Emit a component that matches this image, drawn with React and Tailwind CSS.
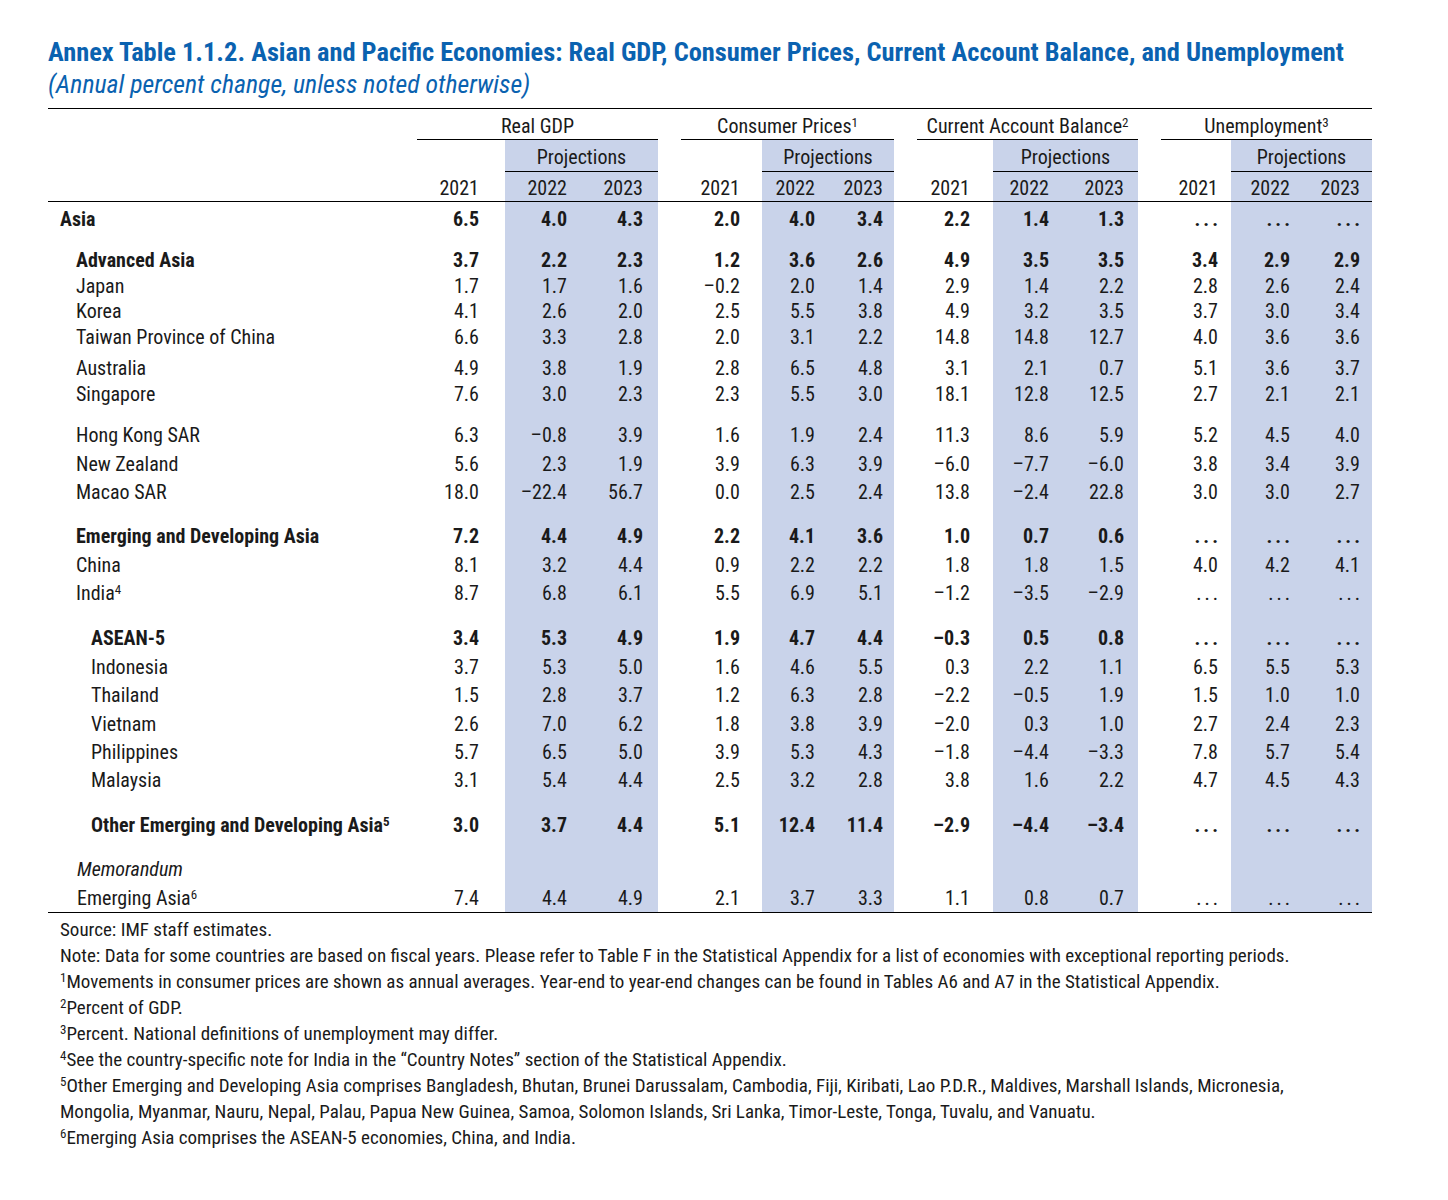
const FONT = "font-['Roboto_Condensed','Roboto',sans-serif]";

const groups = [
  { title: 'Real GDP', sup: null, pr: ['pr-[26px]', 'pr-[14px]', 'pr-[15px]'] },
  { title: 'Consumer Prices', sup: '1', pr: ['pr-[22px]', 'pr-[13px]', 'pr-[11px]'] },
  { title: 'Current Account Balance', sup: '2', pr: ['pr-[23px]', 'pr-[15px]', 'pr-[14px]'] },
  { title: 'Unemployment', sup: '3', pr: ['pr-[13px]', 'pr-[12px]', 'pr-[12px]'] },
];

const D = '...';

const rows = [
  { name: 'Asia', pl: 'pl-[12px]', bold: true, h: 'h-[27px]', v: ['6.5', '4.0', '4.3', '2.0', '4.0', '3.4', '2.2', '1.4', '1.3', D, D, D] },
  { name: 'Advanced Asia', pl: 'pl-[28px]', bold: true, h: 'h-[41px]', v: ['3.7', '2.2', '2.3', '1.2', '3.6', '2.6', '4.9', '3.5', '3.5', '3.4', '2.9', '2.9'] },
  { name: 'Japan', pl: 'pl-[28px]', h: 'h-[26px]', v: ['1.7', '1.7', '1.6', '–0.2', '2.0', '1.4', '2.9', '1.4', '2.2', '2.8', '2.6', '2.4'] },
  { name: 'Korea', pl: 'pl-[28px]', h: 'h-[25px]', v: ['4.1', '2.6', '2.0', '2.5', '5.5', '3.8', '4.9', '3.2', '3.5', '3.7', '3.0', '3.4'] },
  { name: 'Taiwan Province of China', pl: 'pl-[28px]', h: 'h-[26px]', v: ['6.6', '3.3', '2.8', '2.0', '3.1', '2.2', '14.8', '14.8', '12.7', '4.0', '3.6', '3.6'] },
  { name: 'Australia', pl: 'pl-[28px]', h: 'h-[31px]', v: ['4.9', '3.8', '1.9', '2.8', '6.5', '4.8', '3.1', '2.1', '0.7', '5.1', '3.6', '3.7'] },
  { name: 'Singapore', pl: 'pl-[28px]', h: 'h-[26px]', v: ['7.6', '3.0', '2.3', '2.3', '5.5', '3.0', '18.1', '12.8', '12.5', '2.7', '2.1', '2.1'] },
  { name: 'Hong Kong SAR', pl: 'pl-[28px]', h: 'h-[41px]', v: ['6.3', '–0.8', '3.9', '1.6', '1.9', '2.4', '11.3', '8.6', '5.9', '5.2', '4.5', '4.0'] },
  { name: 'New Zealand', pl: 'pl-[28px]', h: 'h-[29px]', v: ['5.6', '2.3', '1.9', '3.9', '6.3', '3.9', '–6.0', '–7.7', '–6.0', '3.8', '3.4', '3.9'] },
  { name: 'Macao SAR', pl: 'pl-[28px]', h: 'h-[28px]', v: ['18.0', '–22.4', '56.7', '0.0', '2.5', '2.4', '13.8', '–2.4', '22.8', '3.0', '3.0', '2.7'] },
  { name: 'Emerging and Developing Asia', pl: 'pl-[28px]', bold: true, h: 'h-[44px]', v: ['7.2', '4.4', '4.9', '2.2', '4.1', '3.6', '1.0', '0.7', '0.6', D, D, D] },
  { name: 'China', pl: 'pl-[28px]', h: 'h-[29px]', v: ['8.1', '3.2', '4.4', '0.9', '2.2', '2.2', '1.8', '1.8', '1.5', '4.0', '4.2', '4.1'] },
  { name: 'India', sup: '4', pl: 'pl-[28px]', h: 'h-[28px]', v: ['8.7', '6.8', '6.1', '5.5', '6.9', '5.1', '–1.2', '–3.5', '–2.9', D, D, D] },
  { name: 'ASEAN-5', pl: 'pl-[43px]', bold: true, h: 'h-[45px]', v: ['3.4', '5.3', '4.9', '1.9', '4.7', '4.4', '–0.3', '0.5', '0.8', D, D, D] },
  { name: 'Indonesia', pl: 'pl-[43px]', h: 'h-[29px]', v: ['3.7', '5.3', '5.0', '1.6', '4.6', '5.5', '0.3', '2.2', '1.1', '6.5', '5.5', '5.3'] },
  { name: 'Thailand', pl: 'pl-[43px]', h: 'h-[28px]', v: ['1.5', '2.8', '3.7', '1.2', '6.3', '2.8', '–2.2', '–0.5', '1.9', '1.5', '1.0', '1.0'] },
  { name: 'Vietnam', pl: 'pl-[43px]', h: 'h-[29px]', v: ['2.6', '7.0', '6.2', '1.8', '3.8', '3.9', '–2.0', '0.3', '1.0', '2.7', '2.4', '2.3'] },
  { name: 'Philippines', pl: 'pl-[43px]', h: 'h-[28px]', v: ['5.7', '6.5', '5.0', '3.9', '5.3', '4.3', '–1.8', '–4.4', '–3.3', '7.8', '5.7', '5.4'] },
  { name: 'Malaysia', pl: 'pl-[43px]', h: 'h-[28px]', v: ['3.1', '5.4', '4.4', '2.5', '3.2', '2.8', '3.8', '1.6', '2.2', '4.7', '4.5', '4.3'] },
  { name: 'Other Emerging and Developing Asia', sup: '5', pl: 'pl-[43px]', bold: true, h: 'h-[45px]', v: ['3.0', '3.7', '4.4', '5.1', '12.4', '11.4', '–2.9', '–4.4', '–3.4', D, D, D] },
  { name: 'Memorandum', italic: true, pl: 'pl-[29px]', h: 'h-[44px]', v: null },
  { name: 'Emerging Asia', sup: '6', pl: 'pl-[29px]', h: 'h-[33px]', pb: 'pb-[4px]', v: ['7.4', '4.4', '4.9', '2.1', '3.7', '3.3', '1.1', '0.8', '0.7', D, D, D] },
];

const GRID = 'grid grid-cols-[369px_88px_76px_77px_23px_81px_66px_66px_23px_76px_71px_74px_23px_70px_71px_70px]';
const SHADE = 'bg-[#c9d3ea]';

const notes = [
  { s: null, t: 'Source: IMF staff estimates.' },
  { s: null, t: 'Note: Data for some countries are based on fiscal years. Please refer to Table F in the Statistical Appendix for a list of economies with exceptional reporting periods.' },
  { s: '1', t: 'Movements in consumer prices are shown as annual averages. Year-end to year-end changes can be found in Tables A6 and A7 in the Statistical Appendix.' },
  { s: '2', t: 'Percent of GDP.' },
  { s: '3', t: 'Percent. National definitions of unemployment may differ.' },
  { s: '4', t: 'See the country-specific note for India in the “Country Notes” section of the Statistical Appendix.' },
  { s: '5', t: 'Other Emerging and Developing Asia comprises Bangladesh, Bhutan, Brunei Darussalam, Cambodia, Fiji, Kiribati, Lao P.D.R., Maldives, Marshall Islands, Micronesia, Mongolia, Myanmar, Nauru, Nepal, Palau, Papua New Guinea, Samoa, Solomon Islands, Sri Lanka, Timor-Leste, Tonga, Tuvalu, and Vanuatu.' },
  { s: '6', t: 'Emerging Asia comprises the ASEAN-5 economies, China, and India.' },
];

function Cell({ value, pr, shade, bold, head, pb = '' }) {
  const dots = value === D;
  return (
    <div className={`flex items-end justify-end ${head ? 'pb-[2px] leading-[22px]' : 'leading-[20px]'} ${pb} ${pr} ${shade ? SHADE : ''}`}>
      <span className={`${dots ? 'tracking-[3px] -mr-[3px]' : ''} ${bold ? 'font-bold' : ''}`}>{value}</span>
    </div>
  );
}

function DataRow({ row }) {
  return (
    <div className={`${GRID} ${row.h}`}>
      <div className={`flex items-end leading-[20px] ${row.pb || ''} ${row.pl}`}>
        <span className={`whitespace-nowrap ${row.bold ? 'font-bold' : ''} ${row.italic ? 'italic' : ''}`}>
          {row.name}
          {row.sup && <sup className="text-[13px]">{row.sup}</sup>}
        </span>
      </div>
      {groups.map((g, gi) => (
        <div key={gi} className="contents">
          {[0, 1, 2].map((k) => (
            <Cell key={k} value={row.v ? row.v[gi * 3 + k] : ''} pr={g.pr[k]} shade={k > 0} bold={row.bold} pb={row.pb} />
          ))}
          {gi < 3 && <div />}
        </div>
      ))}
    </div>
  );
}

export default function App() {
  return (
    <div className={`bg-white text-[#1a1a1a] ${FONT} w-[1448px] min-h-[1200px] pl-[48px] pt-[36px]`}>
      <h1 className="text-[#0a62b0] text-[26.4px] leading-[32px] font-bold whitespace-nowrap">
        Annex Table 1.1.2. Asian and Pacific Economies: Real GDP, Consumer Prices, Current Account Balance, and Unemployment
      </h1>
      <p className="text-[#0a62b0] text-[25.8px] leading-[32px] italic">(Annual percent change, unless noted otherwise)</p>

      <div className="w-[1324px] mt-[8px] border-t border-black text-[20px]">
        {/* group headers */}
        <div className={`${GRID} h-[31px]`}>
          <div />
          {groups.map((g, gi) => (
            <div key={gi} className="contents">
              <div className="col-span-3 flex items-end justify-center pb-[2px] border-b border-black">
                <span className="leading-[22px]">
                  {g.title}
                  {g.sup && <sup className="text-[13px]">{g.sup}</sup>}
                </span>
              </div>
              {gi < 3 && <div />}
            </div>
          ))}
        </div>
        {/* projections */}
        <div className={`${GRID} h-[32px]`}>
          <div />
          {groups.map((g, gi) => (
            <div key={gi} className="contents">
              <div />
              <div className={`col-span-2 flex items-end justify-center pb-[3px] border-b border-black ${SHADE}`}>
                <span className="leading-[22px]">Projections</span>
              </div>
              {gi < 3 && <div />}
            </div>
          ))}
        </div>
        {/* years */}
        <div className={`${GRID} h-[30px] border-b border-black`}>
          <div />
          {groups.map((g, gi) => (
            <div key={gi} className="contents">
              {['2021', '2022', '2023'].map((y, k) => (
                <Cell key={k} value={y} pr={g.pr[k]} shade={k > 0} head />
              ))}
              {gi < 3 && <div />}
            </div>
          ))}
        </div>
        {rows.map((r) => (
          <DataRow key={r.name} row={r} />
        ))}
        <div className="border-t border-black" />
      </div>

      <div className="w-[1276px] pl-[12px] pt-[4px] text-[19px] leading-[26px]">
        {notes.map((n, i) => (
          <p key={i}>
            {n.s && <sup className="text-[13px]">{n.s}</sup>}
            {n.t}
          </p>
        ))}
      </div>
    </div>
  );
}
